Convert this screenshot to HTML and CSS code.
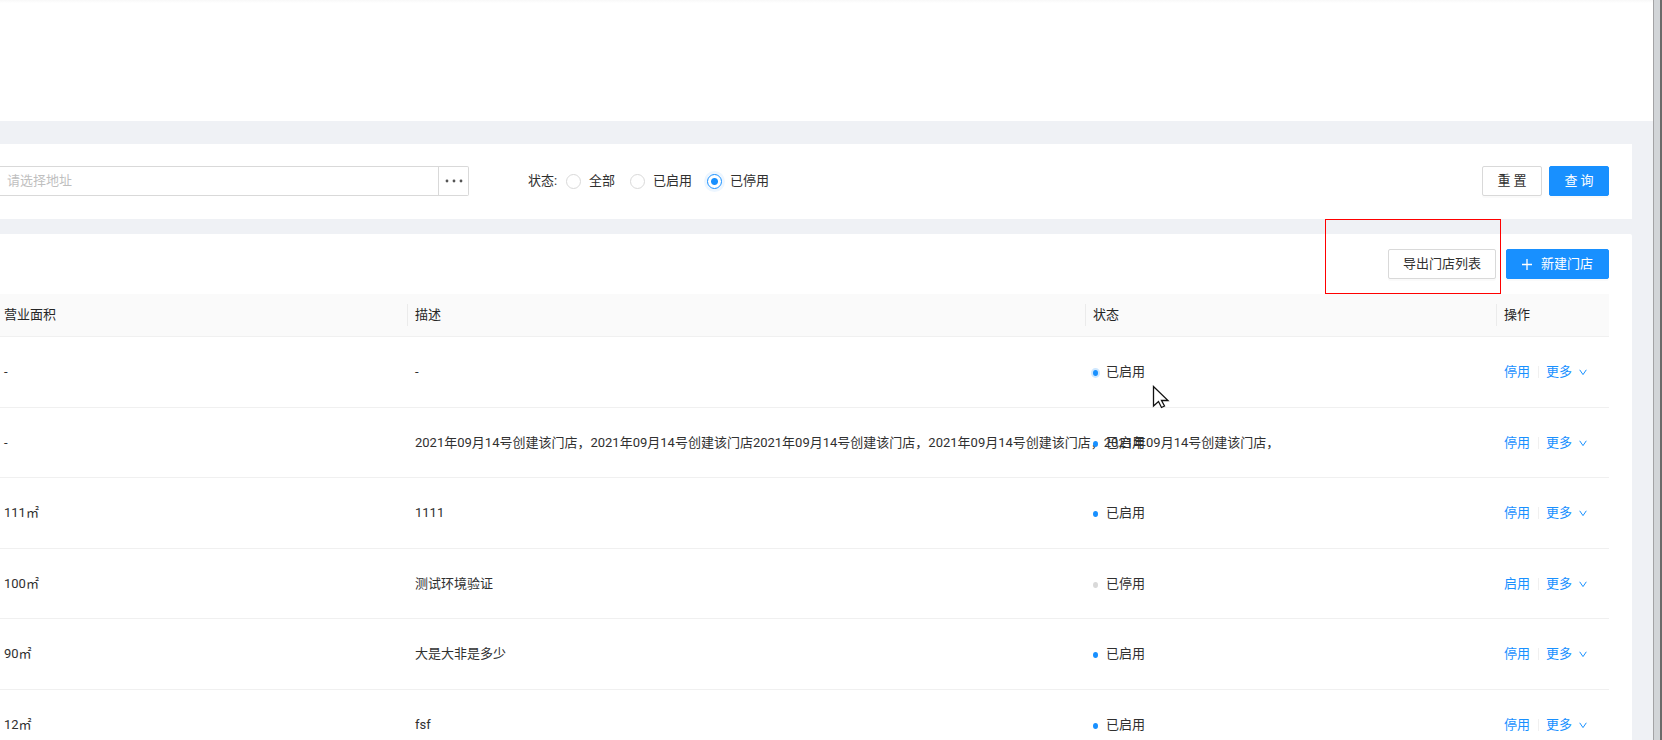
FILE: index.html
```
<!DOCTYPE html>
<html lang="zh-CN">
<head>
    <meta charset="UTF-8">
    <title>门店管理</title>
    <link rel="stylesheet" href="styles.css">
</head>
<body>
    <div class="app">
        <div class="main">
            <div class="top"></div>

            <form class="filter">
                <div class="address">
                    <input type="text" aria-label="地址" placeholder="请选择地址">
                    <button type="button" aria-label="选择地址">
                        <svg width="18" height="4" viewBox="0 0 18 4"><circle cx="2" cy="2" r="1.4"/><circle cx="9" cy="2" r="1.4"/><circle cx="16" cy="2" r="1.4"/></svg>
                    </button>
                </div>
                <div class="status" role="radiogroup" aria-labelledby="status_label">
                    <span id="status_label" class="status-label">状态:</span>
                    <label><input type="radio" name="status">全部</label>
                    <label><input type="radio" name="status">已启用</label>
                    <label><input type="radio" name="status" checked>已停用</label>
                </div>
                <div class="filter-btns">
                    <button type="button" class="btn">重 置</button>
                    <button type="button" class="btn primary">查 询</button>
                </div>
            </form>

            <div class="panel">
                <div class="toolbar">
                    <button type="button" class="btn">导出门店列表</button>
                    <button type="button" class="btn primary add">
                        <svg width="10" height="11" viewBox="0 0 10 11"><path d="M5 0v11M0 5.5h10" stroke="#fff" stroke-width="1.3"/></svg>新建门店
                    </button>
                    <div class="mark"></div>
                </div>
                <table>
                    <colgroup>
                        <col class="col-area"><col><col class="col-status"><col class="col-action">
                    </colgroup>
                    <thead>
                        <tr><th>营业面积</th><th>描述</th><th>状态</th><th>操作</th></tr>
                    </thead>
                    <tbody>
                        <tr>
                            <td>-</td>
                            <td>-</td>
                            <td><i class="dot on active"></i>已启用</td>
                            <td><a href="#">停用</a><i class="line"></i><a href="#">更多<svg class="down" width="8" height="7" viewBox="0 0 8 7"><path d="M.7 .8L4 5.6 7.3 .8"/></svg></a></td>
                        </tr>
                        <tr>
                            <td>-</td>
                            <td>2021年09月14号创建该门店，2021年09月14号创建该门店2021年09月14号创建该门店，2021年09月14号创建该门店，2021年09月14号创建该门店，</td>
                            <td><i class="dot on"></i>已启用</td>
                            <td><a href="#">停用</a><i class="line"></i><a href="#">更多<svg class="down" width="8" height="7" viewBox="0 0 8 7"><path d="M.7 .8L4 5.6 7.3 .8"/></svg></a></td>
                        </tr>
                        <tr>
                            <td>111㎡</td>
                            <td>1111</td>
                            <td><i class="dot on"></i>已启用</td>
                            <td><a href="#">停用</a><i class="line"></i><a href="#">更多<svg class="down" width="8" height="7" viewBox="0 0 8 7"><path d="M.7 .8L4 5.6 7.3 .8"/></svg></a></td>
                        </tr>
                        <tr>
                            <td>100㎡</td>
                            <td>测试环境验证</td>
                            <td><i class="dot"></i>已停用</td>
                            <td><a href="#">启用</a><i class="line"></i><a href="#">更多<svg class="down" width="8" height="7" viewBox="0 0 8 7"><path d="M.7 .8L4 5.6 7.3 .8"/></svg></a></td>
                        </tr>
                        <tr>
                            <td>90㎡</td>
                            <td>大是大非是多少</td>
                            <td><i class="dot on"></i>已启用</td>
                            <td><a href="#">停用</a><i class="line"></i><a href="#">更多<svg class="down" width="8" height="7" viewBox="0 0 8 7"><path d="M.7 .8L4 5.6 7.3 .8"/></svg></a></td>
                        </tr>
                        <tr>
                            <td>12㎡</td>
                            <td>fsf</td>
                            <td><i class="dot on"></i>已启用</td>
                            <td><a href="#">停用</a><i class="line"></i><a href="#">更多<svg class="down" width="8" height="7" viewBox="0 0 8 7"><path d="M.7 .8L4 5.6 7.3 .8"/></svg></a></td>
                        </tr>
                    </tbody>
                </table>
            </div>
        </div>
        <div class="edge"></div>

        <svg class="cursor" width="18" height="24" viewBox="0 0 18 24"><path d="M1.500 1.500v19.500l5-4.500 3 6 3-1.500-3-5.500h6.500z" fill="#fff" stroke="#111" stroke-width="1.300"/></svg>
    </div>
</body>
</html>
```

FILE: styles.css
```
*{
    box-sizing: border-box;
}
body{
    margin: 0;
    font: 13px/20px Roboto, "Noto Sans CJK SC", sans-serif;
    color: #303030;
}
input, button{
    font: inherit;
    color: inherit;
    margin: 0;
}
.app{
    position: relative;
    display: flex;
    height: 100vh;
    overflow: hidden;
    background: #eff1f5;
}
.main{
    flex: 1;
    min-width: 0;
}
/* 窗口右边框 */
.edge{
    width: 9px;
    background: #d2d5d8;
    border-left: 1px solid #a3a3a5;
    border-right: 2px solid #6a6a6a;
}
.top{
    height: 121px;
    background: linear-gradient(#f8f8f8, #fff 3px);
}

/* 筛选 */
.filter{
    display: flex;
    align-items: flex-start;
    margin: 23px 21px 15px 0;
    padding: 22px 23px 23px 0;
    background: #fff;
}
.address{
    display: flex;
    width: 469px;
    height: 30px;
    border: 1px solid #d9d9d9;
    border-left: 0;
    border-radius: 0 2px 2px 0;
}
.address input{
    flex: 1;
    min-width: 0;
    padding: 0 7px;
    border: 0;
    background: none;
}
.address input::placeholder{
    color: #bfbfbf;
}
.address button{
    display: flex;
    align-items: center;
    justify-content: center;
    width: 30px;
    padding: 0;
    border: 0;
    border-left: 1px solid #d9d9d9;
    background: none;
    fill: #555;
}
.status{
    display: flex;
    gap: 15px;
    margin-left: 59px;
    line-height: 30px;
}
.status-label{
    width: 23px;
    white-space: nowrap;
}
.status label{
    display: flex;
    align-items: center;
    gap: 8px;
}
.status input{
    appearance: none;
    width: 15px;
    height: 15px;
    border: 1px solid #d9d9d9;
    border-radius: 50%;
}
.status input:checked{
    border-color: #1890ff;
    background: radial-gradient(circle, #1890ff 3px, #fff 4px);
    box-shadow: 0 0 0 3px #edf6ff;
}
.filter-btns{
    display: flex;
    gap: 7px;
    margin-left: auto;
}
.btn{
    height: 30px;
    padding: 0 14px;
    border: 1px solid #d9d9d9;
    border-radius: 2px;
    background: #fff;
    box-shadow: 0 2px 0 rgba(0,0,0,.02);
    white-space: nowrap;
}
.filter-btns .btn{
    width: 60px;
    padding: 0;
}
.btn.primary{
    border-color: #1890ff;
    background: #1890ff;
    color: #fff;
}
.btn.add{
    display: flex;
    align-items: center;
    gap: 9px;
    padding: 0 15px;
}

/* 列表 */
.panel{
    margin-right: 21px;
    padding-right: 23px;
    border-radius: 0 2px 0 0;
    background: #fff;
}
.toolbar{
    position: relative;
    display: flex;
    justify-content: flex-end;
    gap: 10px;
    padding: 15px 0;
}
.mark{
    position: absolute;
    top: -15px;
    right: 108px;
    width: 176px;
    height: 75px;
    border: 1px solid #f00;
    pointer-events: none;
}
table{
    width: 100%;
    table-layout: fixed;
    border-collapse: separate;
    border-spacing: 0;
}
.col-area{ width: 408px; }
.col-status{ width: 411px; }
.col-action{ width: 112px; }
th, td{
    padding: 0 0 0 7px;
    border-bottom: 1px solid #f0f0f0;
    text-align: left;
    white-space: nowrap;
}
th:first-child, td:first-child{
    padding-left: 4px;
}
th{
    position: relative;
    height: 43px;
    background: #fafafa;
    font-weight: 400;
    color: #262626;
}
th:not(:last-child)::after{
    content: "";
    position: absolute;
    top: 10px;
    right: 0;
    width: 1px;
    height: 22px;
    background: #ebebeb;
}
td{
    height: 70px;
}
tbody tr:nth-child(odd) td{
    height: 71px;
}
.dot{
    display: inline-block;
    width: 5px;
    height: 6px;
    margin-right: 8px;
    border-radius: 50%;
    background: #d9d9d9;
}
.dot.on{
    background: #1890ff;
}
.dot.active{
    box-shadow: 0 0 0 2px #cfe8ff;
}
a{
    color: #1890ff;
    text-decoration: none;
}
.line{
    display: inline-block;
    width: 1px;
    height: 12px;
    margin: 0 7px 0 8px;
    background: #f0f0f0;
    vertical-align: -2px;
}
.down{
    margin-left: 7px;
    fill: none;
    stroke: #1890ff;
}
.cursor{
    position: absolute;
    left: 1152px;
    top: 385px;
}
```
